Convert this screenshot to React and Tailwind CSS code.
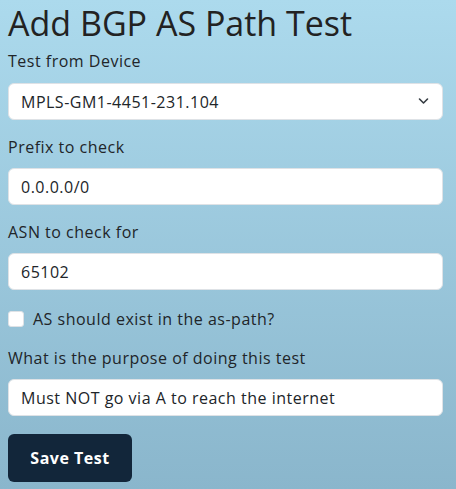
import React, { useState } from 'react';

const Field = ({ label, className = "mt-[15px]", children }) => (
  <div className={className}>
    <label className="block text-base leading-6 text-[#212529] mb-[9px]">{label}</label>
    {children}
  </div>
);

const inputCls = "w-full h-[37px] bg-white rounded-md border border-[#dee2e6] px-[12px] text-base tracking-[0.5px] text-[#212529] outline-none";

export default function App() {
  const [device, setDevice] = useState('MPLS-GM1-4451-231.104');
  const [prefix, setPrefix] = useState('0.0.0.0/0');
  const [asn, setAsn] = useState('65102');
  const [exists, setExists] = useState(false);
  const [purpose, setPurpose] = useState('Must NOT go via A to reach the internet');

  return (
    <div className="min-h-[489px] bg-gradient-to-b from-[#acdaed] to-[#8ab6cc] pl-2 pr-[13px] pb-2 text-[#212529] tracking-[0.5px]" style={{ fontFamily: '"Open Sans", "DejaVu Sans", sans-serif' }}>
      <h1 className="text-[34px] leading-[46px] font-medium text-[#222] tracking-normal">Add BGP AS Path Test</h1>

      <div className="mt-[3px]">
        <label className="block text-base leading-6 mb-[10px]">Test from Device</label>
        <div className="relative">
          <select value={device} onChange={e => setDevice(e.target.value)} className={inputCls + " appearance-none"}>
            <option>MPLS-GM1-4451-231.104</option>
          </select>
          <svg className="absolute right-[14px] top-[14px] pointer-events-none" width="11" height="8" viewBox="0 0 11 8" fill="none">
            <path d="M1.5 2l4 4 4-4" stroke="#343a40" strokeWidth="1.6" strokeLinecap="round" strokeLinejoin="round" />
          </svg>
        </div>
      </div>

      <Field label="Prefix to check">
        <input value={prefix} onChange={e => setPrefix(e.target.value)} className={inputCls} />
      </Field>

      <Field label="ASN to check for">
        <input value={asn} onChange={e => setAsn(e.target.value)} className={inputCls} />
      </Field>

      <label className="flex items-center gap-[9px] mt-[17px] text-base leading-6">
        <input type="checkbox" checked={exists} onChange={() => setExists(!exists)} className="appearance-none w-4 h-4 bg-white rounded-[3px] border border-[#dee2e6]" />
        AS should exist in the as-path?
      </label>

      <Field label="What is the purpose of doing this test">
        <input value={purpose} onChange={e => setPurpose(e.target.value)} className={inputCls} />
      </Field>

      <button className="mt-[18px] w-[124px] h-[48px] bg-[#12263a] text-white font-bold text-base rounded-md">Save Test</button>
    </div>
  );
}
